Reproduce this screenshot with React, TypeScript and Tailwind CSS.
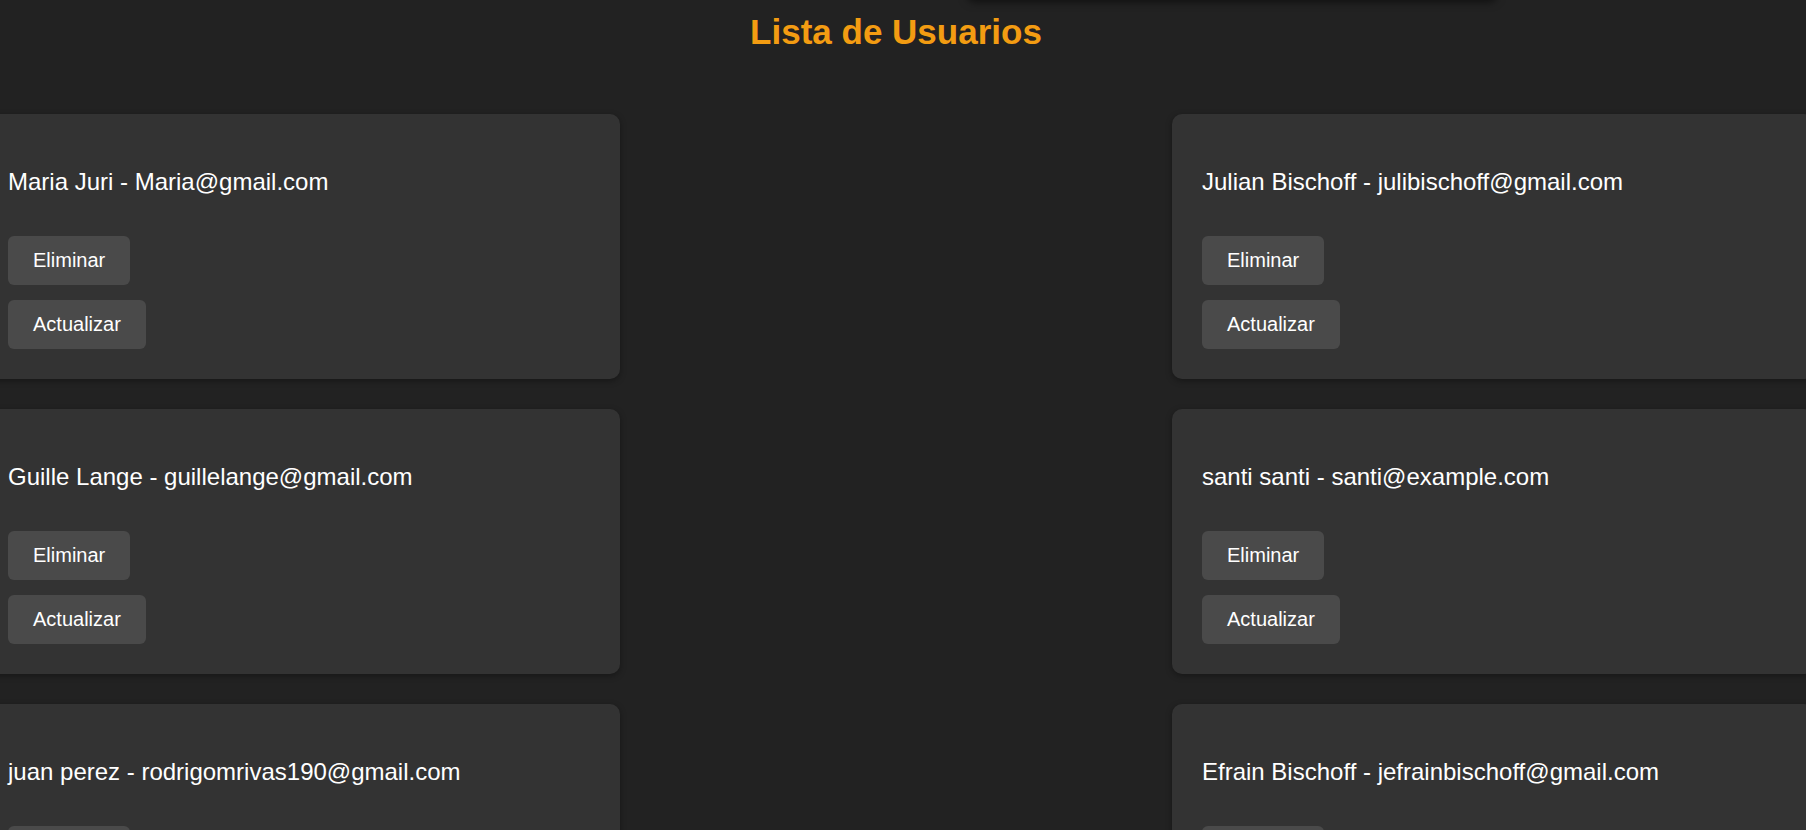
import React from "react";

const users = [
  { name: "Maria Juri", email: "Maria@gmail.com" },
  { name: "Julian Bischoff", email: "julibischoff@gmail.com" },
  { name: "Guille Lange", email: "guillelange@gmail.com" },
  { name: "santi santi", email: "santi@example.com" },
  { name: "juan perez", email: "rodrigomrivas190@gmail.com" },
  { name: "Efrain Bischoff", email: "jefrainbischoff@gmail.com" },
];

function UserCard({ name, email }: { name: string; email: string }) {
  return (
    <div className="rounded-[10px] bg-[#333333] pt-[54px] px-[30px] pb-[30px] shadow-[0_2px_6px_rgba(0,0,0,0.35)]">
      <p className="text-[24px] leading-[28px] text-white whitespace-nowrap">
        {name} - {email}
      </p>
      <div className="mt-[40px] flex flex-col items-start gap-[15px]">
        <button className="h-[49px] px-[25px] rounded-[6px] bg-[#4a4a4a] text-white text-[20px] leading-[23px]">
          Eliminar
        </button>
        <button className="h-[49px] px-[25px] rounded-[6px] bg-[#4a4a4a] text-white text-[20px] leading-[23px]">
          Actualizar
        </button>
      </div>
    </div>
  );
}

export default function App() {
  return (
    <div className="relative h-[830px] w-full overflow-hidden bg-[#222222] font-['Liberation_Sans',Arial,sans-serif]">
      <div className="absolute top-[-40px] left-[967px] w-[530px] h-[40px] rounded-b-[8px] bg-[#222222] shadow-[0_2px_8px_rgba(0,0,0,0.55)]" />
      <div className="w-[1792px] flex flex-col items-center">
        <h1 className="mt-[12px] text-[35px] leading-[40px] font-bold text-[#f39c12]">
          Lista de Usuarios
        </h1>
        <div className="mt-[62px] w-[1836px] shrink-0 grid grid-cols-[642px_642px] justify-between gap-y-[30px]">
          {users.map((u) => (
            <UserCard key={u.email} name={u.name} email={u.email} />
          ))}
        </div>
      </div>
    </div>
  );
}
